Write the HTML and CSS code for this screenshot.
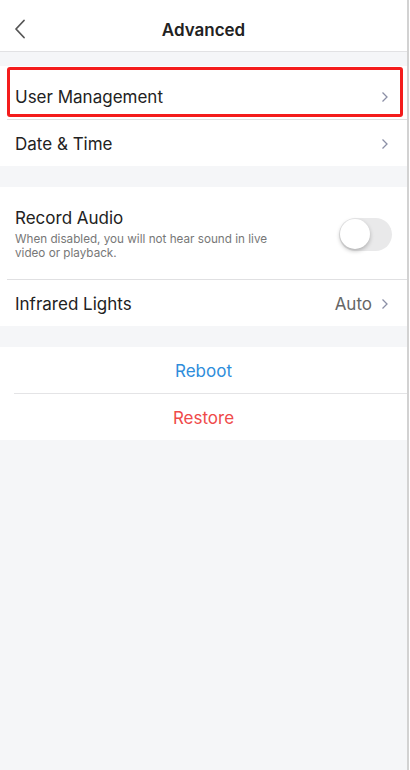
FILE: index.html
```html
<!DOCTYPE html>
<html>
<head>
  <title>Advanced</title>
  <link rel="stylesheet" href="styles.css">
</head>
<body>
  <div class="page">
    <header class="topbar">
      <svg class="back" width="12" height="20" viewBox="0 0 12 20">
        <path d="M10 1.5 L2 10 L10 18.5" fill="none" stroke="#555" stroke-width="1.8" stroke-linecap="round" stroke-linejoin="round"/>
      </svg>
      <h1>Advanced</h1>
    </header>

    <section class="group">
      <div class="row row-first">
        <span class="label">User Management</span>
        <svg class="chev" width="8" height="12" viewBox="0 0 8 12"><path d="M1.5 1.5 L6 6 L1.5 10.5" fill="none" stroke="#8b8fa6" stroke-width="1.3"/></svg>
        <div class="highlight"></div>
      </div>
      <div class="row">
        <span class="label">Date &amp; Time</span>
        <svg class="chev" width="8" height="12" viewBox="0 0 8 12"><path d="M1.5 1.5 L6 6 L1.5 10.5" fill="none" stroke="#8b8fa6" stroke-width="1.3"/></svg>
      </div>
    </section>

    <section class="group">
      <div class="row row-tall">
        <div class="text">
          <span class="label">Record Audio</span>
          <p class="hint">When disabled, you will not hear sound in live video or playback.</p>
        </div>
        <div class="toggle"><div class="knob"></div></div>
      </div>
      <div class="row">
        <span class="label">Infrared Lights</span>
        <span class="value">Auto</span>
        <svg class="chev" width="8" height="12" viewBox="0 0 8 12"><path d="M1.5 1.5 L6 6 L1.5 10.5" fill="none" stroke="#8b8fa6" stroke-width="1.3"/></svg>
      </div>
    </section>

    <section class="group actions">
      <div class="action reboot">Reboot</div>
      <div class="action restore">Restore</div>
    </section>
  </div>
</body>
</html>
```

FILE: styles.css
```css
html, body {
  margin: 0;
  height: 100%;
}

body {
  background-color: #fff;
  font-family: Inter, "Noto Sans", sans-serif;
  color: #222;
}

.page {
  width: 407px;
  height: 770px;
  background-color: #f5f6f8;
  border-right: 2px solid #d2d2d2;
}

.topbar {
  height: 52px;
  box-sizing: border-box;
  padding-top: 8px;
  background-color: #fff;
  border-bottom: 1px solid #e2e2e4;
  display: flex;
  align-items: center;
  justify-content: center;
  position: relative;
  margin-bottom: 14px;
}

.back {
  position: absolute;
  left: 14px;
  top: 19px;
}

.topbar h1 {
  margin: 0;
  font-size: 17px;
  font-weight: 600;
  color: #222;
}

.group {
  background-color: #fff;
  margin-bottom: 21px;
}

.row {
  height: 46px;
  box-sizing: border-box;
  display: flex;
  align-items: center;
  margin-left: 7px;
  padding: 2px 18px 0 8px;
  border-top: 1px solid #e0e0e2;
  position: relative;
}

.row:first-child {
  border-top: none;
}

.row + .row {
  height: 47px;
}

.row-first {
  height: 53px;
  padding-top: 9px;
}

.highlight {
  position: absolute;
  left: 0;
  right: 4px;
  top: 1px;
  height: 50px;
  box-sizing: border-box;
  border: 3px solid #f41c1c;
  border-radius: 3px;
}

.label {
  font-size: 17px;
  color: #222;
  flex: 1;
}

.value {
  font-size: 17px;
  color: #666;
  margin-right: 9px;
}

.chev {
  display: block;
}

.row-tall {
  height: 92px;
  padding-right: 15px;
}

.text {
  flex: 1;
  padding-bottom: 2px;
}

.text .label {
  display: block;
  line-height: 22px;
}

.hint {
  margin: 3px 0 0 0;
  width: 262px;
  font-size: 11.7px;
  line-height: 14px;
  color: #777;
}

.toggle {
  width: 53px;
  height: 33px;
  border-radius: 17px;
  background-color: #e9e9ea;
  display: flex;
  align-items: center;
  padding-left: 1px;
  box-sizing: border-box;
}

.knob {
  width: 30px;
  height: 30px;
  border-radius: 50%;
  background-color: #fff;
  box-shadow: 0 2px 4px rgba(0, 0, 0, 0.25);
}

.action {
  height: 46px;
  box-sizing: border-box;
  padding-top: 2px;
  display: flex;
  align-items: center;
  justify-content: center;
  font-size: 17px;
}

.reboot {
  color: #2e8ddb;
}

.restore {
  color: #ef4a4a;
  height: 47px;
  border-top: 1px solid #e4e4e6;
  margin-left: 14px;
  padding-right: 14px;
}
```
